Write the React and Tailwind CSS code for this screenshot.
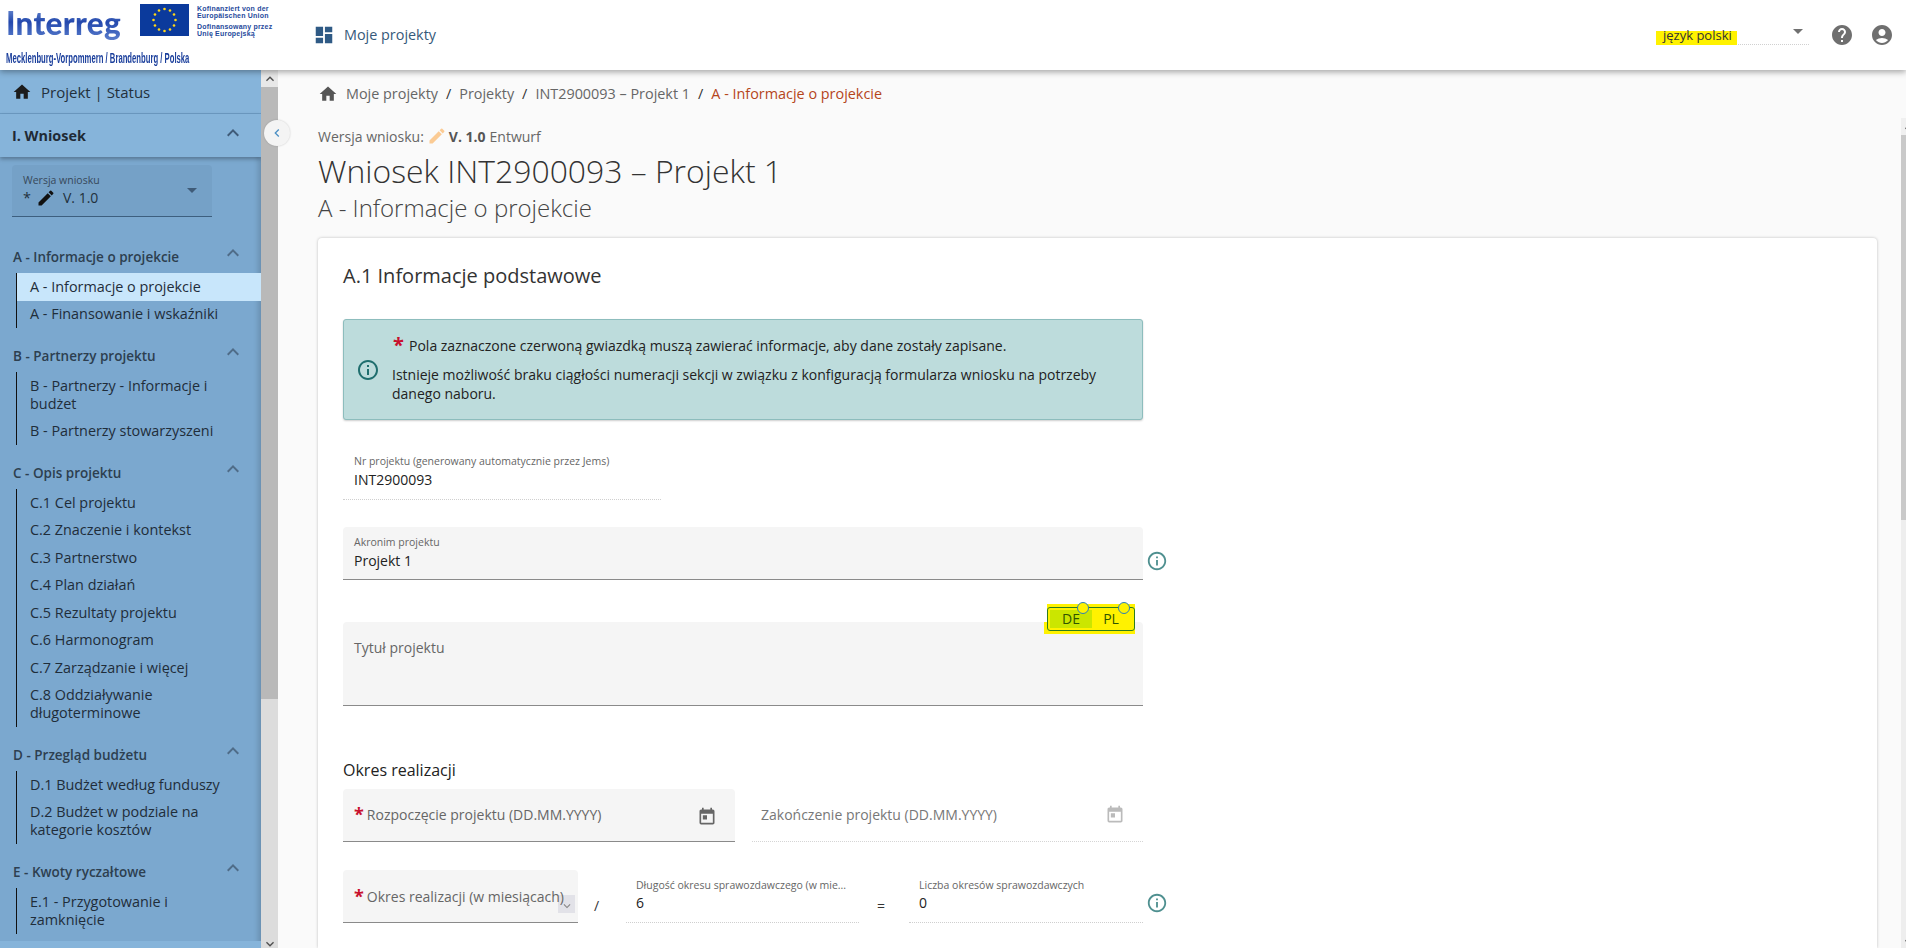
import { MdAccountCircle, MdArrowDropDown, MdDashboard, MdEdit, MdExpandLess, MdExpandMore, MdHelp, MdHome, MdInfoOutline, MdKeyboardArrowLeft, MdToday } from 'react-icons/md';

const sections = [
  { title: 'A - Informacje o projekcie', items: ['A - Informacje o projekcie', 'A - Finansowanie i wskaźniki'], active: 0 },
  { title: 'B - Partnerzy projektu', items: ['B - Partnerzy - Informacje i budżet', 'B - Partnerzy stowarzyszeni'] },
  { title: 'C - Opis projektu', items: ['C.1 Cel projektu', 'C.2 Znaczenie i kontekst', 'C.3 Partnerstwo', 'C.4 Plan działań', 'C.5 Rezultaty projektu', 'C.6 Harmonogram', 'C.7 Zarządzanie i więcej', 'C.8 Oddziaływanie długoterminowe'] },
  { title: 'D - Przegląd budżetu', items: ['D.1 Budżet według funduszy', 'D.2 Budżet w podziale na kategorie kosztów'] },
  { title: 'E - Kwoty ryczałtowe', items: ['E.1 - Przygotowanie i zamknięcie'] },
];

const EuFlag = () => (
  <svg width="49" height="32" viewBox="0 0 49 32" className="shrink-0">
    <rect width="49" height="32" fill="#0b3a9c" />
    {Array.from({ length: 12 }).map((_, i) => {
      const a = (i * Math.PI) / 6;
      return <circle key={i} cx={24.5 + 11 * Math.sin(a)} cy={16 - 11 * Math.cos(a)} r="1.3" fill="#ffd617" />;
    })}
  </svg>
);

const Header = () => (
  <header className="relative z-20 h-[70px] shrink-0 flex items-center bg-white shadow-[0_2px_6px_rgba(0,0,0,0.35)]">
    <div className="w-[315px] shrink-0 h-full pl-[6px] pt-[4px]">
      <div className="flex items-start">
        <div className="w-[134px] h-[36px] pt-[3px] font-['Lato'] font-black text-[31.5px] leading-[33px] tracking-[0.3px] text-transparent bg-clip-text bg-gradient-to-b from-[#7f9bd8] via-[#2448ad] to-[#5b7dcc]">Interreg</div>
        <EuFlag />
        <div className="ml-2 pt-[1px] font-['Liberation_Sans'] font-bold text-[7px] leading-[7px] tracking-[0.2px] text-[#1f4a9c]">
          <p>Kofinanziert von der</p>
          <p>Europäischen Union</p>
          <p className="mt-[4px]">Dofinansowany przez</p>
          <p>Unię Europejską</p>
        </div>
      </div>
      <div className="mt-[10px] w-[300px] origin-left scale-x-[0.55] whitespace-nowrap font-['Liberation_Sans'] font-bold text-[14px] leading-[16px] text-[#1b3f9c]">Mecklenburg-Vorpommern / Brandenburg / Polska</div>
    </div>
    <MdDashboard className="w-[22px] h-[22px] -ml-[2px] text-[#2f5a85]" />
    <span className="ml-[9px] text-[14.4px] text-[#36597a]">Moje projekty</span>
    <div className="ml-auto flex items-center">
      <div className="relative w-[153px] h-[20px] flex items-center border-b border-dotted border-[#d0d0d0]">
        <span className="absolute left-0 top-[6px] w-[81px] h-[14px] bg-[#fff200]" />
        <span className="relative ml-[7px] text-[13px] leading-[18px] text-[#333]">język polski</span>
        <MdArrowDropDown className="absolute right-[-1px] top-[-6px] w-[24px] h-[24px] text-[#707070]" />
      </div>
      <MdHelp className="ml-[21px] w-[24px] h-[24px] text-[#6f6f6f]" />
      <MdAccountCircle className="ml-[16px] mr-[12px] w-[24px] h-[24px] text-[#6f6f6f]" />
    </div>
  </header>
);

const Sidebar = () => (
  <aside className="w-[261px] shrink-0 flex flex-col overflow-hidden bg-[#7ba8cf] text-[14.4px] leading-[18px] shadow-[inset_-6px_0_6px_-4px_rgba(0,0,0,0.18)]">
    <div className="h-[44px] shrink-0 flex items-center pl-[12px] bg-[#86b4da] border-b border-[#6d9cc4]">
      <MdHome className="w-[20px] h-[20px] text-[#1c1c1c]" />
      <span className="ml-[9px] text-[15px] text-[#22303c]">Projekt | Status</span>
    </div>
    <div className="relative z-10 h-[43px] shrink-0 flex items-center justify-between pl-[12px] pr-[16px] bg-[#86b4da] font-bold text-[#1f2a35] shadow-[0_2px_4px_rgba(0,0,0,0.3)]">
      <span>I. Wniosek</span>
      <MdExpandLess className="w-[24px] h-[24px] -mt-[6px] text-[#3f5b78]" />
    </div>
    <div className="shrink-0 mt-[8px] mx-[12px] h-[52px] w-[200px] relative pl-[11px] pt-[9px] rounded-t bg-[#75a1c7] border-b border-[#3d5f7f]">
      <p className="text-[10.5px] leading-[12px] text-[#37485a]">Wersja wniosku</p>
      <div className="flex items-center mt-[2px] text-[#22303c]">
        <span className="w-[13px]">*</span>
        <MdEdit className="w-[20px] h-[20px] text-[#111]" />
        <span className="ml-[7px] text-[14px]">V. 1.0</span>
      </div>
      <MdArrowDropDown className="absolute right-[8px] top-[13px] w-[24px] h-[24px] text-[#3f5b78]" />
    </div>
    <nav className="pt-[12px] shrink-0">
      {sections.map(s => (
        <section key={s.title} className="mt-[12px] first:mt-[12px]">
          <div className="h-[32px] flex items-center justify-between pl-[13px] pr-[16px] text-[13.5px] font-semibold text-[#2d3f50]">
            <span>{s.title}</span>
            <MdExpandLess className="w-[24px] h-[24px] -mt-[8px] text-[#4f6c88]" />
          </div>
          <ul className="ml-[16px] border-l border-[#111]">
            {s.items.map((item, i) => (
              <li key={item} className={`pl-[13px] pr-[30px] py-[4.75px] text-[#1f2d3a] ${s.active === i ? 'bg-[#c8e6fb]' : ''}`}>{item}</li>
            ))}
          </ul>
        </section>
      ))}
    </nav>
    <div className="flex-1 mt-[7px] bg-[#86b4da]" />
  </aside>
);

const SideScroll = () => (
  <div className="relative w-[17px] shrink-0 flex flex-col bg-[#dcdcdc]">
    <div className="h-[17px] shrink-0 flex items-center justify-center bg-[#e8e8e8]">
      <MdExpandLess className="w-[16px] h-[16px] text-[#505050]" />
    </div>
    <div className="h-[612px] shrink-0 bg-[#b9b9b9]" />
    <div className="mt-auto -mb-[4px] flex justify-center">
      <MdExpandMore className="w-[16px] h-[16px] text-[#505050]" />
    </div>
    <button className="absolute z-10 top-[50px] left-[3px] w-[26px] h-[26px] rounded-full flex items-center justify-center bg-[#f4f4f4] shadow-[0_0_2px_rgba(0,0,0,0.2)]">
      <MdKeyboardArrowLeft className="w-[16px] h-[16px] text-[#4b8fc4]" />
    </button>
  </div>
);

const Info = ({ className }) => <MdInfoOutline className={`w-[22px] h-[22px] shrink-0 text-[#4f9090] ${className || ''}`} />;

const Star = () => <span className="text-[#c8102e] font-bold text-[18px] leading-[14px] h-[12px] ml-[-1px] mr-[3px] -mt-[2px]">*</span>;

const ReadField = ({ label, value, className }) => (
  <div className={`h-[53px] px-[10px] pt-[8px] border-b border-dotted border-[#cfcfcf] ${className}`}>
    <p className="truncate text-[10.5px] leading-[14px] text-[#666]">{label}</p>
    <p className="mt-[2px] text-[14px] leading-[18px] text-[#222]">{value}</p>
  </div>
);

const Form = () => (
  <div className="mt-[14px] flex-1 min-h-0 rounded-t bg-white pl-[25px] pt-[24px] shadow-[0_0_3px_rgba(0,0,0,0.25)]">
    <h2 className="text-[20px] leading-[28px] text-[#333]">A.1 Informacje podstawowe</h2>
    <div className="w-[800px] h-[101px] mt-[29px] flex items-center rounded-[3px] bg-[#bddcdc] border border-[#8dbdbd] shadow-[0_1px_2px_rgba(0,0,0,0.2)]">
      <MdInfoOutline className="ml-[12px] mr-[12px] w-[24px] h-[24px] shrink-0 text-[#1f6e6e]" />
      <div className="text-[14px] leading-[19px] text-[#222]">
        <p className="flex items-center h-[19px] mb-[10px]"><span className="text-[#c8102e] font-bold text-[20px] leading-[14px] w-[17px] pl-[1px] h-[12px] -mt-[3px]">*</span>Pola zaznaczone czerwoną gwiazdką muszą zawierać informacje, aby dane zostały zapisane.</p>
        <p className="pr-[20px]">Istnieje możliwość braku ciągłości numeracji sekcji w związku z konfiguracją formularza wniosku na potrzeby danego naboru.</p>
      </div>
    </div>
    <div className="mt-[27px] w-[318px] h-[53px] px-[11px] pt-[7px] border-b border-dotted border-[#cfcfcf]">
      <p className="text-[10.5px] leading-[14px] text-[#666]">Nr projektu (generowany automatycznie przez Jems)</p>
      <p className="mt-[3px] text-[14px] leading-[18px] text-[#222]">INT2900093</p>
    </div>
    <div className="mt-[27px] flex items-end">
      <div className="w-[800px] h-[53px] px-[11px] pt-[8px] rounded-t bg-[#f5f5f5] border-b border-[#8a8a8a]">
        <p className="text-[10.5px] leading-[14px] text-[#666]">Akronim projektu</p>
        <p className="mt-[3px] text-[14px] leading-[18px] text-[#222]">Projekt 1</p>
      </div>
      <Info className="ml-[3px] mb-[8px]" />
    </div>
    <div className="relative mt-[42px] w-[800px] h-[84px] px-[11px] pt-[16px] rounded-t bg-[#f5f5f5] border-b border-[#8a8a8a]">
      <p className="text-[14px] leading-[20px] text-[#666]">Tytuł projektu</p>
      <div className="absolute left-[704px] -top-[18px] w-[88px] h-[30px] bg-[#fff200]">
        <span className="absolute -left-[3px] top-[18px] w-[3px] h-[12px] bg-[#fff200]" />
        <div className="absolute left-0 top-[3px] w-[88px] h-[24px] flex rounded-[3px] border border-[#2e7d1f] pl-[2px] py-[2px] text-[14px] leading-[18px] text-[#2f5500]">
          <span className="w-[42px] text-center bg-[#cbe600]">DE</span>
          <span className="w-[38px] text-center">PL</span>
        </div>
        <span className="absolute left-[30px] -top-[2px] w-[12px] h-[12px] rounded-full bg-[#fff200] border border-[#2a7fb8]" />
        <span className="absolute left-[71px] -top-[2px] w-[12px] h-[12px] rounded-full bg-[#fff200] border border-[#2a7fb8]" />
      </div>
    </div>
    <h3 className="mt-[53px] text-[16px] leading-[22px] text-[#222]">Okres realizacji</h3>
    <div className="mt-[8px] w-[800px] flex justify-between">
      <div className="w-[392px] h-[53px] flex items-center pl-[12px] pr-[18px] pb-[2px] rounded-t bg-[#f5f5f5] border-b border-[#8a8a8a]">
        <Star />
        <span className="text-[14px] text-[#666]">Rozpoczęcie projektu (DD.MM.YYYY)</span>
        <MdToday className="ml-auto mt-[6px] w-[20px] h-[20px] text-[#666]" />
      </div>
      <div className="w-[391px] h-[53px] flex items-center pl-[9px] pr-[18px] pb-[2px] border-b border-dotted border-[#d5d5d5]">
        <span className="text-[14px] text-[#777]">Zakończenie projektu (DD.MM.YYYY)</span>
        <MdToday className="ml-auto mt-[2px] w-[20px] h-[20px] text-[#bbb]" />
      </div>
    </div>
    <div className="mt-[28px] flex items-end">
      <div className="relative w-[235px] h-[53px] flex items-center pl-[12px] rounded-t bg-[#f5f5f5] border-b border-[#8a8a8a] whitespace-nowrap">
        <div className="absolute right-[3px] top-[25px] w-[17px] h-[18px] flex items-end justify-center bg-[#e2e2e8]">
          <MdExpandMore className="w-[14px] h-[14px] text-[#888]" />
        </div>
        <Star />
        <span className="relative text-[14px] text-[#666]">Okres realizacji (w miesiącach)</span>
      </div>
      <span className="w-[48px] pl-[16px] pb-[7px] text-[14px] text-[#333]">/</span>
      <ReadField label="Długość okresu sprawozdawczego (w mie..." value="6" className="w-[233px]" />
      <span className="w-[50px] pl-[18px] pb-[7px] text-[14px] text-[#333]">=</span>
      <ReadField label="Liczba okresów sprawozdawczych" value="0" className="w-[234px]" />
      <Info className="ml-[3px] mb-[9px]" />
    </div>
  </div>
);

const Main = () => (
  <main className="relative flex-1 min-w-0 flex flex-col overflow-hidden pl-[40px] pr-[29px] bg-[#fafafa]">
    <div className="mt-[14px] h-[20px] shrink-0 flex items-center text-[14.4px] text-[#666]">
      <MdHome className="w-[20px] h-[20px] text-[#555]" />
      <span className="ml-[8px]">Moje projekty</span>
      <span className="mx-[8px] text-[#333]">/</span>
      <span>Projekty</span>
      <span className="mx-[8px] text-[#333]">/</span>
      <span>INT2900093 – Projekt 1</span>
      <span className="mx-[8px] text-[#333]">/</span>
      <span className="text-[#b5451b]">A - Informacje o projekcie</span>
    </div>
    <div className="mt-[22px] h-[20px] shrink-0 flex items-center text-[14px] text-[#666]">
      <span>Wersja wniosku:</span>
      <MdEdit className="ml-[3px] w-[20px] h-[20px] text-[#fbcb94]" />
      <span className="ml-[2px] font-bold text-[#555]">V. 1.0</span>
      <span className="ml-[4px]">Entwurf</span>
    </div>
    <h1 className="mt-[4px] h-[42px] shrink-0 font-light text-[31.9px] leading-[42px] text-[#333]">Wniosek INT2900093 – Projekt 1</h1>
    <p className="h-[32px] shrink-0 font-light text-[24px] leading-[32px] text-[#444]">A - Informacje o projekcie</p>
    <Form />
    <div className="absolute right-0 top-[48px] bottom-0 w-[5px] flex flex-col overflow-hidden bg-[#eeeeee]">
      <div className="h-[17px] shrink-0 flex items-center bg-[#f0f0f0]">
        <MdExpandLess className="w-[16px] h-[16px] shrink-0 text-[#505050]" />
      </div>
      <div className="h-[385px] shrink-0 bg-[#c9c9c9]" />
      <div className="mt-auto -mb-[2px] flex">
        <MdExpandMore className="w-[16px] h-[16px] shrink-0 text-[#505050]" />
      </div>
    </div>
  </main>
);

export default function App() {
  return (
    <div className="h-screen flex flex-col overflow-hidden bg-[#fafafa] font-['Open_Sans',sans-serif]">
      <Header />
      <div className="flex-1 min-h-0 flex">
        <Sidebar />
        <SideScroll />
        <Main />
      </div>
    </div>
  );
}
